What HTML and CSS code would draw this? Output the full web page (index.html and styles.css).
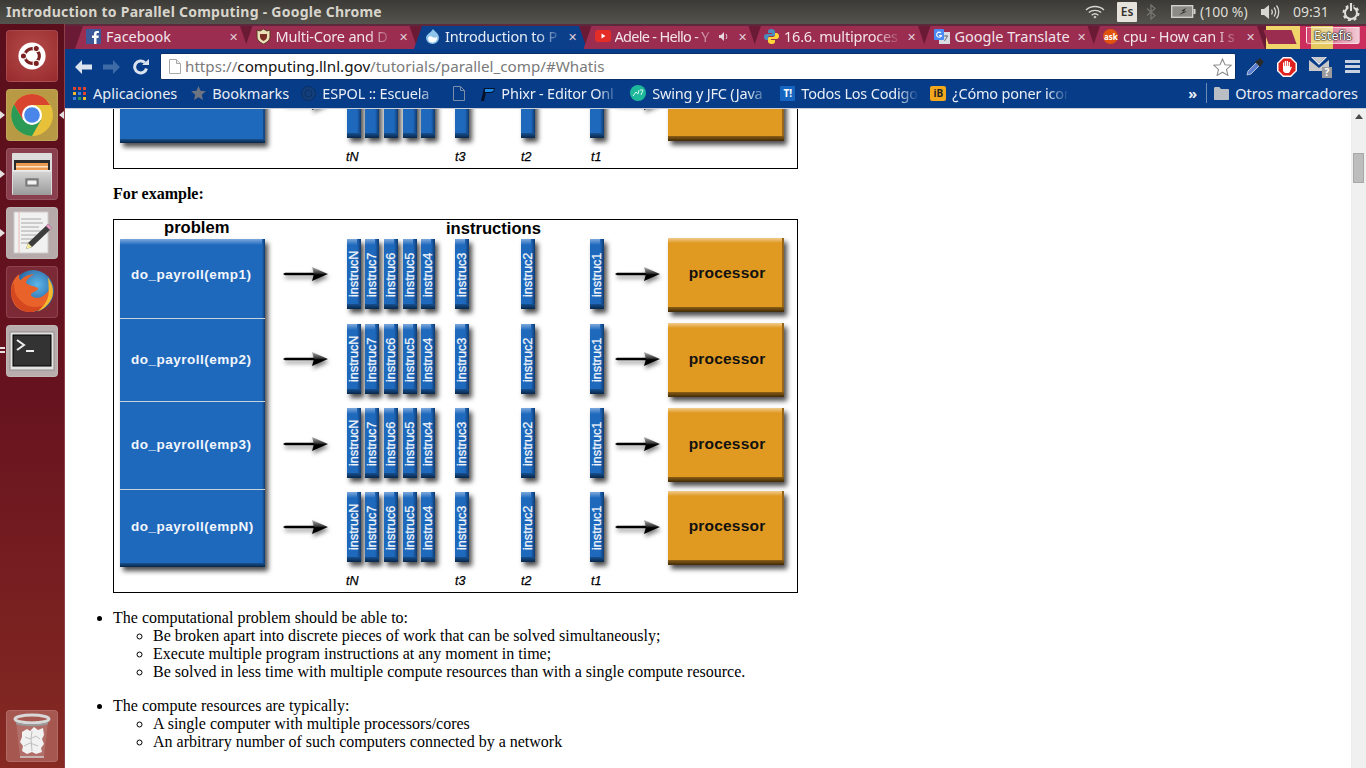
FILE: index.html
```html
<!DOCTYPE html>
<html lang="en">
<head>
    <meta charset="UTF-8">
    <meta name="viewport" content="width=device-width, initial-scale=1.0">
    <title>Introduction to Parallel Computing - Google Chrome</title>
    <link rel="stylesheet" href="styles.css">
</head>
<body>
    <!-- shared shapes for the two figures -->
    <svg class="defs" width="0" height="0">
        <defs>
            <linearGradient id="blueTop" x1="0" y1="0" x2="0" y2="1"><stop offset="0" stop-color="#7da9dc"/><stop offset="1" stop-color="#1f69bd"/></linearGradient>
            <linearGradient id="blueBot" x1="0" y1="0" x2="0" y2="1"><stop offset="0" stop-color="#17508f"/><stop offset="1" stop-color="#08264a"/></linearGradient>
            <linearGradient id="blueRight" x1="0" y1="0" x2="1" y2="0"><stop offset="0" stop-color="#1f69bd"/><stop offset="1" stop-color="#0e3a70"/></linearGradient>
            <linearGradient id="orangeTop" x1="0" y1="0" x2="0" y2="1"><stop offset="0" stop-color="#f0cc90"/><stop offset="1" stop-color="#e09a22"/></linearGradient>
            <linearGradient id="orangeBot" x1="0" y1="0" x2="0" y2="1"><stop offset="0" stop-color="#8c5f14"/><stop offset="1" stop-color="#3f2a08"/></linearGradient>
            <linearGradient id="headFill" x1="0" y1="0" x2="0" y2="1"><stop offset="0" stop-color="#b5b5b5"/><stop offset=".45" stop-color="#333"/><stop offset=".55" stop-color="#000"/><stop offset="1" stop-color="#000"/></linearGradient>
            <linearGradient id="filesBody" x1="0" y1="0" x2="0" y2="1"><stop offset="0" stop-color="#d8d8d8"/><stop offset="1" stop-color="#9a9a9a"/></linearGradient>
            <radialGradient id="foxGlobe" cx=".6" cy=".35" r=".7"><stop offset="0" stop-color="#5cb8ea"/><stop offset="1" stop-color="#123f80"/></radialGradient>
            <g id="bar" class="shadow">
                <rect width="14" height="70" fill="#1f69bd"/>
                <rect width="14" height="6" fill="url(#blueTop)"/>
                <rect x="10" width="4" height="70" fill="url(#blueRight)"/>
                <rect y="65" width="14" height="5" fill="url(#blueBot)"/>
            </g>
            <g id="proc" class="shadow">
                <rect width="116" height="74" fill="#e09a22"/>
                <rect width="116" height="5" fill="url(#orangeTop)"/>
                <rect x="114" width="2" height="74" fill="#96661a"/>
                <rect y="69" width="116" height="5" fill="url(#orangeBot)"/>
            </g>
            <g id="arrow" class="arrow-shadow">
                <path d="M0 0l2-1.300h30v2.600H2z" fill="#000"/>
                <polygon points="29,-7 45,0 29,7 31,0" fill="url(#headFill)"/>
            </g>
            <g id="blockPart" class="shadow">
                <rect x="120" y="100" width="145" height="43" fill="#1f69bd"/>
                <rect x="263" y="100" width="2" height="43" fill="#144a8a"/>
                <rect x="120" y="139" width="145" height="4" fill="url(#blueBot)"/>
            </g>
        </defs>
    </svg>

    <header class="topbar">
        <span class="win-title">Introduction to Parallel Computing - Google Chrome</span>
        <div class="indicators">
            <svg class="ind-wifi" width="20" height="14" viewBox="0 0 20 14"><g fill="none" stroke="#d8d6d0" stroke-width="1.400"><path d="M1 5c5-4.600 13-4.600 18 0"/><path d="M3.800 7.600c3.400-3 9-3 12.400 0"/><path d="M6.600 10.200c2-1.600 4.800-1.600 6.800 0"/></g><path d="M8.400 12l1.600-1.200 1.600 1.200-1.600 1.600z" fill="#d8d6d0"/></svg>
            <span class="ind-lang">Es</span>
            <svg class="ind-bt" width="11" height="16" viewBox="0 0 11 16"><path d="M1 4.500l8 7-4 3.500V1l4 3.500-8 7" fill="none" stroke="#77756f" stroke-width="1.300"/></svg>
            <svg class="ind-bat" width="25" height="13" viewBox="0 0 25 13"><rect x=".7" y=".7" width="21" height="11.600" fill="#8d8b85" stroke="#d8d6d0" stroke-width="1.300"/><rect x="22.500" y="4" width="2" height="5" fill="#d8d6d0"/><path d="M15 3l-5 3h3l-5 4 8-3.500h-3z" fill="#2f2e2a"/></svg>
            <span class="ind-text ind-pct">(100 %)</span>
            <svg class="ind-vol" width="20" height="16" viewBox="0 0 20 16"><path d="M0 5h3l5-4v14l-5-4H0z" fill="#d8d6d0"/><g fill="none" stroke="#d8d6d0" stroke-width="1.300"><path d="M10.500 5.500c1 1.500 1 3.500 0 5"/><path d="M13 3.500c2 2.700 2 6.300 0 9"/><path d="M15.500 1.500c3 3.800 3 9.200 0 13"/></g></svg>
            <span class="ind-text ind-clock">09:31</span>
            <svg class="ind-power" width="18" height="18" viewBox="0 0 18 18"><circle cx="9" cy="10" r="6" fill="none" stroke="#e2e0da" stroke-width="2"/><circle cx="9" cy="10" r="7.500" fill="none" stroke="#e2e0da" stroke-width="2" stroke-dasharray="3 2.900"/><rect x="6.500" y="0" width="5" height="6" fill="#4c4a45"/><rect x="8" y="0" width="2" height="8" fill="#e2e0da"/></svg>
        </div>
    </header>

    <div class="desktop">
        <nav class="launcher">
            <div class="tile tile-ubuntu">
                <svg width="28" height="28" viewBox="0 0 36 36"><circle cx="18" cy="18" r="17.500" fill="#fff"/><circle cx="18" cy="18" r="9.500" fill="none" stroke="#7c2122" stroke-width="4"/><g fill="#7c2122" stroke="#fff" stroke-width="1.500"><circle cx="7" cy="18" r="4"/><circle cx="23.500" cy="8.500" r="4"/><circle cx="23.500" cy="27.500" r="4"/></g></svg>
            </div>
            <div class="tile tile-chrome">
                <span class="pip pip-left"></span><span class="pip pip-right"></span>
                <svg width="44" height="44" viewBox="0 0 44 44"><circle cx="22" cy="22" r="21" fill="#e8c13a"/><path d="M22 1a21 21 0 0 0-18 10.500L13 27l9-15h18A21 21 0 0 0 22 1z" fill="#d9442f"/><path d="M4 11.500A21 21 0 0 0 22 43l9-16H13z" fill="#2a9a55"/><circle cx="22" cy="22" r="10" fill="#fff"/><circle cx="22" cy="22" r="7.800" fill="#4a85ea"/></svg>
            </div>
            <div class="tile tile-files">
                <span class="pip pip-left"></span>
                <svg width="42" height="44" viewBox="0 0 42 44"><rect x="1" y="1" width="40" height="42" rx="1" fill="#dcdcdc"/><rect x="3" y="8" width="36" height="12" fill="#2a2a2a"/><rect x="5" y="11" width="32" height="7" fill="#ec9a52"/><rect x="5" y="14" width="32" height="1.500" fill="#fbe3c4"/><rect x="2" y="18" width="38" height="25" fill="url(#filesBody)"/><rect x="2" y="18" width="38" height="1.500" fill="#efefef"/><rect x="14" y="26" width="14" height="9" rx="1" fill="#8d8d8d"/><rect x="16" y="28" width="10" height="5" fill="#f2f2f2" stroke="#555" stroke-width=".7"/></svg>
            </div>
            <div class="tile tile-editor">
                <span class="pip pip-left"></span>
                <svg width="42" height="44" viewBox="0 0 42 44"><rect x="3" y="1" width="34" height="41" fill="#f1f1f1" stroke="#ccc"/><path d="M8 1v41" stroke="#eeb8b8"/><g stroke="#a8a8a8"><path d="M10 8h20M10 12h22M10 16h18M10 20h21M10 24h16M10 28h12M10 32h8"/></g><path d="M37 13l4 4-20 19-6 2 2-6z" fill="#3d3d3d"/><path d="M37 13l4 4-2 2-4-4z" fill="#e59ac4"/><path d="M17 32l4 4-6 2z" fill="#f4eba0"/></svg>
            </div>
            <div class="tile tile-firefox">
                <svg width="48" height="48" viewBox="0 0 46 46"><circle cx="24" cy="22" r="20" fill="url(#foxGlobe)"/><path d="M3 24C2 15 7 8 11 6c-1 3 0 5 1 6 3-4 8-6 13-6-4 2-7 5-8 8 3 4 10 3 12 6-1 3-7 3-7 6 4 5 14 3 19-8 1 4 1 9-2 14-5 8-14 11-21 10C8 41 3 32 3 24z" fill="#e8622a"/><path d="M3 24c1 9 7 17 16 18 7 1 13-2 17-7-8 4-17 3-23-3C8 28 5 22 6 14 4 17 3 20 3 24z" fill="#d4471f"/><path d="M38 9c5 6 7 15 3 22-3 5-7 9-13 11 7-6 11-12 11-19 0-5 0-10-1-14z" fill="#f6b82e"/></svg>
            </div>
            <div class="tile tile-term">
                <span class="pip-dash"></span>
                <svg width="46" height="40" viewBox="0 0 46 40"><rect x="1" y="1" width="44" height="38" fill="#e3e3e3" stroke="#8e8e8e"/><rect x="4" y="4" width="38" height="31" fill="#333" stroke="#000"/><path d="M8 9l7 5-7 5" fill="none" stroke="#eee" stroke-width="2"/><rect x="17" y="19" width="8" height="2" fill="#eee"/></svg>
            </div>
            <div class="tile tile-trash">
                <svg width="38" height="46" viewBox="0 0 38 46"><path d="M3 8h32l-4 36H7z" fill="#ffffff" fill-opacity=".14"/><ellipse cx="19" cy="6" rx="17" ry="4" fill="none" stroke="#d8d8d8" stroke-width="3"/><path d="M3 9c6 3 26 3 32 0v2c-6 3-26 3-32 0z" fill="#999"/><path d="M9 19l5-3 3 2 4-4 4 3 5-2 1 7-2 4 2 5-3 4 1 4-6 2-4-2-5 2-5-3 1-5-3-4 2-5z" fill="#f1f1f1"/><path d="M12 24l5 2 6-3 4 3M11 33l6-3 8 3M19 18l-1 8 1 12" fill="none" stroke="#bdbdbd"/><path d="M7 44h24" stroke="#cfcfcf" stroke-width="1.500"/></svg>
            </div>
        </nav>

        <div class="browser">
            <div class="tabstrip">
                <div class="tab">
                    <svg class="fav" width="15" height="15" viewBox="0 0 15 15"><rect width="15" height="15" fill="#3b5998"/><path d="M10.500 15V9h2l.3-2.400h-2.300V5.200c0-.7.2-1.100 1.200-1.100h1.200V2c-.9-.1-1.500-.1-2-.1C9 1.900 8 3 8 5v1.600H6V9h2v6z" fill="#fff"/></svg>
                    <span class="tab-title">Facebook</span><span class="tab-x">✕</span>
                </div>
                <div class="tab">
                    <svg class="fav" width="15" height="15" viewBox="0 0 15 15"><path d="M1 1l3 1 3.500-2L11 2l3-1v7c0 3-3 5.500-6.500 7C4 13.500 1 11 1 8z" fill="#e9dfb8" stroke="#5a3a20"/><path d="M4 5h7v3c0 2-2 3-3.500 4C6 11 4 10 4 8z" fill="#7b2d26"/></svg>
                    <span class="tab-title tab-cut">Multi-Core and D</span><span class="tab-x">✕</span>
                </div>
                <div class="tab tab-active">
                    <svg class="fav" width="15" height="15" viewBox="0 0 15 15"><path d="M8 0c1 2 6 4 6 9a6.500 6 0 0 1-13 0c0-4 5-5 7-9z" fill="#8fc4ea"/><path d="M3 9c1-2 3-2 4.500-1S11 9 12 8c1 3-2 5.500-4.500 5.500S3 12 3 9z" fill="#fff"/></svg>
                    <span class="tab-title tab-cut">Introduction to P</span><span class="tab-x">✕</span>
                </div>
                <div class="tab">
                    <svg class="fav fav-yt" width="16" height="12" viewBox="0 0 16 12"><rect width="16" height="12" rx="3" fill="#e52d27"/><path d="M6.500 3.500l4 2.500-4 2.500z" fill="#fff"/></svg>
                    <span class="tab-title tab-cut tab-tight">Adele - Hello - Y</span>
                    <svg class="tab-sound" width="10" height="9" viewBox="0 0 10 9"><path d="M0 3h2l3-3v9L2 6H0z" fill="#e6d5dc"/><path d="M7 2c1 1.500 1 3.500 0 5" fill="none" stroke="#e6d5dc"/></svg>
                    <span class="tab-x">✕</span>
                </div>
                <div class="tab">
                    <svg class="fav" width="15" height="15" viewBox="0 0 15 15"><path d="M7.500 0C4.500 0 4 1.300 4 2.500V4h4v1H2.500C1 5 0 6 0 7.800S1 11 2.500 11H4V9c0-1.300 1-2 2-2h3.500C10.500 7 11 6.300 11 5.500v-3C11 1 9.500 0 7.500 0z" fill="#4b8bbe"/><path d="M7.500 15c3 0 3.500-1.300 3.500-2.500V11H7v-1h5.500C14 10 15 9 15 7.200S14 4 12.500 4H11v2c0 1.300-1 2-2 2H5.500C4.500 8 4 8.700 4 9.500v3C4 14 5.500 15 7.500 15z" fill="#ffd43b"/></svg>
                    <span class="tab-title tab-cut">16.6. multiproces</span><span class="tab-x">✕</span>
                </div>
                <div class="tab">
                    <svg class="fav" width="16" height="15" viewBox="0 0 16 15"><rect x="5" y="3" width="11" height="12" fill="#d9dde3"/><path d="M10 7h4M12 6v1M10.500 12l3-5" stroke="#6c7480" fill="none"/><rect width="10" height="11" rx="1" fill="#4a8af4"/><path d="M7 4a2.500 2.500 0 1 0 .5 2.500H5" fill="none" stroke="#fff" stroke-width="1.100"/></svg>
                    <span class="tab-title">Google Translate</span><span class="tab-x">✕</span>
                </div>
                <div class="tab">
                    <svg class="fav" width="15" height="15" viewBox="0 0 15 15"><circle cx="7.500" cy="7.500" r="7.500" fill="#e2530e"/></svg>
                    <span class="fav-ask">ask</span>
                    <span class="tab-title tab-cut">cpu - How can I s</span><span class="tab-x">✕</span>
                </div>
                <div class="newtab"></div>
                <div class="profile">Estefis</div>
            </div>

            <div class="toolbar">
                <svg class="tb-back" width="17" height="14" viewBox="0 0 17 14"><path d="M7 0L0 7l7 7V9.500h10v-5H7z" fill="#dbe3ee"/></svg>
                <svg class="tb-fwd" width="17" height="14" viewBox="0 0 17 14"><path d="M10 0l7 7-7 7V9.500H0v-5h10z" fill="#3e6aa5"/></svg>
                <svg class="tb-reload" width="16" height="16" viewBox="0 0 16 16"><path d="M13.500 9.500A6 6 0 1 1 11.800 3.600" fill="none" stroke="#dbe3ee" stroke-width="3"/><path d="M9 6h7V0z" fill="#dbe3ee"/></svg>
                <div class="omnibox">
                    <svg class="omni-page" width="12" height="15" viewBox="0 0 12 15"><path d="M.5.500h7l4 4v10H.500z" fill="#fff" stroke="#a9a9a9"/><path d="M7.500.500v4h4" fill="#e8e8e8" stroke="#a9a9a9"/></svg>
                    <span class="url"><span class="url-dim">https://</span>computing.llnl.gov<span class="url-dim">/tutorials/parallel_comp/#Whatis</span></span>
                    <svg class="omni-star" width="19" height="18" viewBox="0 0 19 18"><path d="M9.500 1l2.500 5.700 6.200.6-4.700 4.100 1.400 6-5.400-3.200-5.400 3.200 1.400-6L.8 7.300 7 6.700z" fill="#fff" stroke="#8d8d8d" stroke-width="1.100"/></svg>
                </div>
                <svg class="tb-drop" width="18" height="18" viewBox="0 0 18 18"><path d="M1 17l1-4 8-8 3 3-8 8z" fill="#5c7fd0" stroke="#cfd6e4" stroke-width=".8"/><path d="M10 3l2-1 2-2 4 4-2 2-1 2-1 1-5-5z" fill="#2a2a2a"/></svg>
                <svg class="tb-block" width="20" height="20" viewBox="0 0 20 20"><path d="M6 0h8l6 6v8l-6 6H6l-6-6V6z" fill="#fff"/><path d="M6.500 1.500h7l5 5v7l-5 5h-7l-5-5v-7z" fill="#e0201c"/><path d="M6 9V5.500h1.200V9h.6V4h1.300v5h.6V4H11v5h.6V5h1.300v6l1-1.500 1 .5-2 4.500c-.5 1-1 1.500-2.500 1.500H9c-2 0-3-1.500-3-3z" fill="#fff"/></svg>
                <div class="tb-mail">
                    <svg width="23" height="22" viewBox="0 0 23 22"><path d="M0 1h20v14H0z" fill="#c9c9c9"/><path d="M0 1h4l6 6 6-6h4v3l-10 8L0 4z" fill="#063c88"/><path d="M2 1h2l6 6 6-6h2l-8 8z" fill="#eee"/><rect x="13" y="11" width="10" height="11" fill="#9c9c9c"/></svg>
                    <span class="mail-q">?</span>
                </div>
                <div class="tb-menu"><span></span><span></span><span></span></div>
            </div>

            <div class="bookmarks">
                <svg class="bm-ico bm-apps" width="13" height="13" viewBox="0 0 13 13">
                    <g fill="#e0432f"><rect width="3" height="3"/><rect x="5" width="3" height="3"/><rect x="10" width="3" height="3"/></g>
                    <g fill="#f0b92b"><rect y="5" width="3" height="3"/><rect x="5" y="5" width="3" height="3" fill="#3f7fe0"/><rect x="10" y="5" width="3" height="3" fill="#e0432f"/></g>
                    <g fill="#3f7fe0"><rect y="10" width="3" height="3"/><rect x="5" y="10" width="3" height="3" fill="#2a9a55"/><rect x="10" y="10" width="3" height="3" fill="#f0b92b"/></g>
                </svg>
                <span class="bm-text bm-apps-text">Aplicaciones</span>
                <svg class="bm-ico bm-star" width="15" height="14" viewBox="0 0 15 14"><path d="M7.500 0l2 4.800 5.300.5-4 3.500 1.200 5.200-4.500-2.700L3 14l1.200-5.200-4-3.500 5.300-.5z" fill="#6e7480"/></svg>
                <span class="bm-text bm-marks-text">Bookmarks</span>
                <div class="bm">
                    <svg width="15" height="15" viewBox="0 0 15 15"><circle cx="7.500" cy="7.500" r="7" fill="#123f7c" stroke="#0c2f60"/><circle cx="7.500" cy="7.500" r="3.500" fill="none" stroke="#0c2f60"/></svg>
                    <span class="bm-title">ESPOL :: Escuela</span>
                </div>
                <svg class="bm-ico bm-file" width="12" height="15" viewBox="0 0 12 15"><path d="M.5.500h7l4 4v10H.500zM7.500.500v4h4" fill="none" stroke="#7a8da8"/></svg>
                <div class="bm">
                    <svg width="15" height="15" viewBox="0 0 15 15"><path d="M1 15L4 2h11c-.5 3-1.500 5-5 5H6l-2 8z" fill="#06122a"/><path d="M5 3h9c-.5 2-1.500 3-4 3H5z" fill="#1e88e5"/></svg>
                    <span class="bm-title">Phixr - Editor Onl</span>
                </div>
                <div class="bm">
                    <svg width="16" height="16" viewBox="0 0 16 16"><circle cx="8" cy="8" r="8" fill="#1eb89a"/><path d="M3 11l3-4 2 2 1-4M10 5h3l-2 5" fill="none" stroke="#d8f5ee"/></svg>
                    <span class="bm-title">Swing y JFC (Java</span>
                </div>
                <div class="bm">
                    <span class="bm-t">T!</span>
                    <span class="bm-title">Todos Los Codigo</span>
                </div>
                <div class="bm">
                    <span class="bm-ib">iB</span>
                    <span class="bm-title">¿Cómo poner icon</span>
                </div>
                <span class="bm-more">»</span>
                <span class="bm-sep"></span>
                <svg class="bm-ico bm-folder" width="15" height="13" viewBox="0 0 15 13"><path d="M0 1.500C0 .7.500 0 1.300 0h4L7 2h7c.6 0 1 .5 1 1v9c0 .6-.4 1-1 1H1c-.6 0-1-.4-1-1z" fill="#b9bdc4"/></svg>
                <span class="bm-text">Otros marcadores</span>
            </div>

            <div class="viewport">
                <main class="page">
                    <!-- bottom of the figure above, the rest is scrolled away -->
                    <div class="fig fig-cut">
                        <svg width="683" height="59" viewBox="114 109 683 59">
                            <use href="#blockPart"/>
                            <use href="#arrow" x="283" y="103"/>
                            <use href="#arrow" x="615" y="103"/>
                            <use href="#bar" x="347" y="68"/><use href="#bar" x="365" y="68"/><use href="#bar" x="384" y="68"/><use href="#bar" x="403" y="68"/><use href="#bar" x="421" y="68"/>
                            <use href="#bar" x="455" y="68"/><use href="#bar" x="521" y="68"/><use href="#bar" x="590" y="68"/>
                            <use href="#proc" x="668" y="67"/>
                            <text class="t-label" x="346" y="161">tN</text><text class="t-label" x="455" y="161">t3</text><text class="t-label" x="521" y="161">t2</text><text class="t-label" x="591" y="161">t1</text>
                        </svg>
                    </div>

                    <p class="example"><b>For example:</b></p>

                    <div class="fig">
                        <svg width="683" height="372" viewBox="114 220 683 372">
                            <text class="heading" x="164" y="233">problem</text>
                            <text class="heading" x="446" y="234">instructions</text>
                            <g class="shadow">
                                <rect x="120" y="239" width="145" height="328" fill="#1f69bd"/>
                                <rect x="120" y="239" width="145" height="6" fill="url(#blueTop)"/>
                                <rect x="262" y="239" width="3" height="328" fill="url(#blueRight)"/>
                                <rect x="120" y="563" width="145" height="4" fill="url(#blueBot)"/>
                                <rect x="120" y="318" width="145" height="1" fill="#c9d3dd"/>
                                <rect x="120" y="401" width="145" height="1" fill="#c9d3dd"/>
                                <rect x="120" y="489" width="145" height="1" fill="#c9d3dd"/>
                            </g>

                            <g>
                                <text class="payroll" x="131" y="279">do_payroll(emp1)</text>
                                <use href="#arrow" x="283" y="274"/>
                                <use href="#bar" x="347" y="239"/><use href="#bar" x="365" y="239"/><use href="#bar" x="384" y="239"/><use href="#bar" x="403" y="239"/><use href="#bar" x="421" y="239"/>
                                <use href="#bar" x="455" y="239"/><use href="#bar" x="521" y="239"/><use href="#bar" x="590" y="239"/>
                                <text class="bar-label" transform="translate(358,297) rotate(-90)">instrucN</text>
                                <text class="bar-label" transform="translate(376,297) rotate(-90)">instruc7</text>
                                <text class="bar-label" transform="translate(395,297) rotate(-90)">instruc6</text>
                                <text class="bar-label" transform="translate(414,297) rotate(-90)">instruc5</text>
                                <text class="bar-label" transform="translate(432,297) rotate(-90)">instruc4</text>
                                <text class="bar-label" transform="translate(466,297) rotate(-90)">instruc3</text>
                                <text class="bar-label" transform="translate(532,297) rotate(-90)">instruc2</text>
                                <text class="bar-label" transform="translate(601,297) rotate(-90)">instruc1</text>
                                <use href="#arrow" x="615" y="274"/>
                                <use href="#proc" x="668" y="238"/>
                                <text class="proc-label" x="727" y="278">processor</text>
                            </g>
                            <g transform="translate(0,85)">
                                <text class="payroll" x="131" y="279">do_payroll(emp2)</text>
                                <use href="#arrow" x="283" y="274"/>
                                <use href="#bar" x="347" y="239"/><use href="#bar" x="365" y="239"/><use href="#bar" x="384" y="239"/><use href="#bar" x="403" y="239"/><use href="#bar" x="421" y="239"/>
                                <use href="#bar" x="455" y="239"/><use href="#bar" x="521" y="239"/><use href="#bar" x="590" y="239"/>
                                <text class="bar-label" transform="translate(358,297) rotate(-90)">instrucN</text>
                                <text class="bar-label" transform="translate(376,297) rotate(-90)">instruc7</text>
                                <text class="bar-label" transform="translate(395,297) rotate(-90)">instruc6</text>
                                <text class="bar-label" transform="translate(414,297) rotate(-90)">instruc5</text>
                                <text class="bar-label" transform="translate(432,297) rotate(-90)">instruc4</text>
                                <text class="bar-label" transform="translate(466,297) rotate(-90)">instruc3</text>
                                <text class="bar-label" transform="translate(532,297) rotate(-90)">instruc2</text>
                                <text class="bar-label" transform="translate(601,297) rotate(-90)">instruc1</text>
                                <use href="#arrow" x="615" y="274"/>
                                <use href="#proc" x="668" y="238"/>
                                <text class="proc-label" x="727" y="279">processor</text>
                            </g>
                            <g transform="translate(0,170)">
                                <text class="payroll" x="131" y="279">do_payroll(emp3)</text>
                                <use href="#arrow" x="283" y="274"/>
                                <use href="#bar" x="347" y="238"/><use href="#bar" x="365" y="238"/><use href="#bar" x="384" y="238"/><use href="#bar" x="403" y="238"/><use href="#bar" x="421" y="238"/>
                                <use href="#bar" x="455" y="238"/><use href="#bar" x="521" y="238"/><use href="#bar" x="590" y="238"/>
                                <text class="bar-label" transform="translate(358,296) rotate(-90)">instrucN</text>
                                <text class="bar-label" transform="translate(376,296) rotate(-90)">instruc7</text>
                                <text class="bar-label" transform="translate(395,296) rotate(-90)">instruc6</text>
                                <text class="bar-label" transform="translate(414,296) rotate(-90)">instruc5</text>
                                <text class="bar-label" transform="translate(432,296) rotate(-90)">instruc4</text>
                                <text class="bar-label" transform="translate(466,296) rotate(-90)">instruc3</text>
                                <text class="bar-label" transform="translate(532,296) rotate(-90)">instruc2</text>
                                <text class="bar-label" transform="translate(601,296) rotate(-90)">instruc1</text>
                                <use href="#arrow" x="615" y="274"/>
                                <use href="#proc" x="668" y="238"/>
                                <text class="proc-label" x="727" y="279">processor</text>
                            </g>
                            <g transform="translate(0,253)">
                                <text class="payroll" x="131" y="278">do_payroll(empN)</text>
                                <use href="#arrow" x="283" y="274"/>
                                <use href="#bar" x="347" y="239"/><use href="#bar" x="365" y="239"/><use href="#bar" x="384" y="239"/><use href="#bar" x="403" y="239"/><use href="#bar" x="421" y="239"/>
                                <use href="#bar" x="455" y="239"/><use href="#bar" x="521" y="239"/><use href="#bar" x="590" y="239"/>
                                <text class="bar-label" transform="translate(358,297) rotate(-90)">instrucN</text>
                                <text class="bar-label" transform="translate(376,297) rotate(-90)">instruc7</text>
                                <text class="bar-label" transform="translate(395,297) rotate(-90)">instruc6</text>
                                <text class="bar-label" transform="translate(414,297) rotate(-90)">instruc5</text>
                                <text class="bar-label" transform="translate(432,297) rotate(-90)">instruc4</text>
                                <text class="bar-label" transform="translate(466,297) rotate(-90)">instruc3</text>
                                <text class="bar-label" transform="translate(532,297) rotate(-90)">instruc2</text>
                                <text class="bar-label" transform="translate(601,297) rotate(-90)">instruc1</text>
                                <use href="#arrow" x="615" y="274"/>
                                <use href="#proc" x="668" y="238"/>
                                <text class="proc-label" x="727" y="278">processor</text>
                            </g>
                            <text class="t-label" x="346" y="585">tN</text>
                            <text class="t-label" x="455" y="585">t3</text>
                            <text class="t-label" x="521" y="585">t2</text>
                            <text class="t-label" x="591" y="585">t1</text>
                        </svg>
                    </div>

                    <ul class="list">
                        <li>The computational problem should be able to:
                            <ul>
                                <li>Be broken apart into discrete pieces of work that can be solved simultaneously;</li>
                                <li>Execute multiple program instructions at any moment in time;</li>
                                <li>Be solved in less time with multiple compute resources than with a single compute resource.</li>
                            </ul>
                        </li>
                        <li>The compute resources are typically:
                            <ul>
                                <li>A single computer with multiple processors/cores</li>
                                <li>An arbitrary number of such computers connected by a network</li>
                            </ul>
                        </li>
                    </ul>
                </main>
                <aside class="scrollbar">
                    <span class="scroll-up"></span>
                    <span class="scroll-thumb"></span>
                </aside>
            </div>
        </div>
    </div>
</body>
</html>
```

FILE: styles.css
```css
* {
    box-sizing: border-box;
}
html, body {
    margin: 0;
    height: 768px;
    overflow: hidden;
}
body {
    width: 1366px;
    font-family: "Noto Sans", sans-serif;
    background: #fff;
    color: #000;
}
.defs {
    position: absolute;
}

/* top panel */
.topbar {
    height: 24px;
    display: flex;
    align-items: center;
    justify-content: space-between;
    padding: 0 0 1px 6px;
    background: linear-gradient(#3b3a36, #55534d);
}
.win-title {
    padding-bottom: 1px;
    font-size: 14px;
    font-weight: 700;
    color: #d8d5cc;
    letter-spacing: 0.25px;
    white-space: nowrap;
}
.indicators {
    display: flex;
    align-items: center;
    color: #dfddd6;
    font-size: 14px;
}
.ind-wifi { margin-right: 12px; }
.ind-lang {
    width: 20px;
    height: 20px;
    margin-right: 9px;
    background: #e6e3dc;
    color: #33322e;
    border-radius: 1px;
    font-size: 12px;
    font-weight: 600;
    line-height: 20px;
    text-align: center;
}
.ind-bt { margin-right: 14px; }
.ind-bat { margin-right: 4px; }
.ind-text {
    white-space: nowrap;
}
.ind-pct { width: 48px; margin-right: 13px; }
.ind-vol { margin-right: 12px; }
.ind-clock { width: 36px; margin-right: 13px; }
.ind-power { margin-right: 6px; }

.desktop {
    display: flex;
    height: 744px;
}

/* launcher */
.launcher {
    width: 65px;
    flex: none;
    display: flex;
    flex-direction: column;
    align-items: flex-start;
    gap: 7px;
    padding: 6px 0 6px 6px;
    background: linear-gradient(#5a0e1b, #67131f 50%, #862a22);
    border-right: 1px solid #8d4048;
}
.tile {
    position: relative;
    width: 52px;
    height: 52px;
    flex: none;
    display: flex;
    align-items: center;
    justify-content: center;
    border-radius: 4px;
    border: 1px solid rgba(255, 255, 255, 0.12);
}
.tile-ubuntu { background: radial-gradient(circle at 50% 40%, #b74c4c, #962a2c); }
.tile-chrome { background: #b89a45; }
.tile-files { background: #8a3f4e; }
.tile-editor { background: #b6aaaa; }
.tile-firefox { background: #7c2a36; }
.tile-term { background: #b9adad; }
.tile-trash {
    margin-top: auto;
    background: #a65750;
}
.pip {
    position: absolute;
    top: 21px;
    width: 0;
    height: 0;
    border-top: 4px solid transparent;
    border-bottom: 4px solid transparent;
}
.pip-left {
    left: -7px;
    border-left: 5px solid #e6e0e0;
}
.pip-right {
    right: -7px;
    border-right: 5px solid #e6e0e0;
}
.pip-dash {
    position: absolute;
    left: -7px;
    top: 21px;
    width: 5px;
    height: 6px;
    border-top: 2px solid #e6e0e0;
    border-bottom: 2px solid #e6e0e0;
}

/* browser frame */
.browser {
    flex: 1;
    min-width: 0;
    display: flex;
    flex-direction: column;
}
.tabstrip {
    position: relative;
    height: 25px;
    display: flex;
    padding-left: 10px;
    padding-top: 2px;
    background:
        linear-gradient(#5c2a3c 0, #5c2a3c 2px, transparent 2px),
        linear-gradient(90deg, #6b1a36 1201px, #f0d66a 1201px, #f0d66a 1235px, #cb2e5c 1235px, #cb2e5c 1246px, #e6c95e 1246px, #e6c95e 1268px, #cb2e5c 1268px);
}
.tab {
    width: 173px;
    height: 23px;
    flex: none;
    margin-right: -3.5px;
    display: flex;
    align-items: center;
    padding: 0 8px 3px 11px;
    background: #9b2d50;
    color: #f1e4ea;
    font-size: 14.500px;
    clip-path: polygon(0 100%, 8px 0, calc(100% - 8px) 0, 100% 100%);
}
.tab-active {
    background: #0b3f8a;
    color: #e6edf6;
}
.fav {
    flex: none;
    margin-right: 5px;
}
.fav-yt { margin-right: 4px; }
.fav-ask {
    position: absolute;
    margin-left: 1px;
    color: #fff;
    font-size: 8px;
    font-weight: 700;
}
.tab-title {
    flex: 1;
    min-width: 0;
    overflow: hidden;
    white-space: nowrap;
}
.tab-cut {
    letter-spacing: -0.2px;
    -webkit-mask-image: linear-gradient(90deg, #000 78%, transparent 100%);
    mask-image: linear-gradient(90deg, #000 78%, transparent 100%);
}
.tab-tight {
    letter-spacing: -0.7px;
}
.tab-sound {
    flex: none;
    margin: 0 4px 0 2px;
}
.tab-x {
    flex: none;
    width: 13px;
    margin-left: 3px;
    text-align: center;
    font-size: 11px;
    color: #e0cdd5;
}
.newtab {
    width: 28px;
    height: 14px;
    margin: 4px 0 0 4px;
    flex: none;
    background: #9b2d50;
    transform: skewX(20deg);
}
.profile {
    position: absolute;
    right: 6px;
    top: 3px;
    width: 54px;
    height: 17px;
    background: linear-gradient(90deg, rgba(255, 255, 255, 0.1), rgba(255, 255, 255, 0.75));
    border: 1px solid rgba(255, 255, 255, 0.5);
    border-radius: 0 0 3px 3px;
    color: #fff;
    font-size: 12.500px;
    line-height: 15px;
    text-align: center;
    text-shadow: 0 0 1px #000, 0 0 1px #000, 0 0 2px #000;
}

/* toolbar */
.toolbar {
    height: 36px;
    display: flex;
    align-items: center;
    padding: 0 0 1px 10px;
    background: #063c88;
}
.tb-back { margin-right: 11px; }
.tb-fwd { margin-right: 13px; }
.tb-reload { margin-right: 11px; }
.omnibox {
    width: 1076px;
    height: 27px;
    display: flex;
    align-items: center;
    padding: 0 3px 0 8px;
    background: #fff;
    border: 1px solid #0a2f66;
    border-radius: 2px;
}
.url {
    flex: 1;
    margin-left: 4px;
    padding-bottom: 1px;
    font-size: 15.200px;
    color: #111;
    white-space: nowrap;
}
.url-dim {
    color: #7a7a7a;
}
.tb-drop { margin-left: 10px; }
.tb-block { margin-left: 13px; }
.tb-mail {
    position: relative;
    height: 22px;
    margin-left: 12px;
}
.mail-q {
    position: absolute;
    right: 0;
    bottom: 0;
    width: 10px;
    color: #fff;
    font-size: 10px;
    font-weight: 700;
    line-height: 11px;
    text-align: center;
}
.tb-menu {
    width: 15px;
    margin-left: 13px;
    display: flex;
    flex-direction: column;
    gap: 2px;
}
.tb-menu span {
    height: 3px;
    background: #c8d2e0;
}

/* bookmarks bar */
.bookmarks {
    height: 24px;
    display: flex;
    align-items: center;
    padding: 0 8px 7px 8px;
    background: #063c88;
    border-bottom: 1px solid #c9ced6;
    color: #e9eef5;
    font-size: 14.500px;
}
.bm-ico { flex: none; }
.bm-text { white-space: nowrap; }
.bm-apps { margin-right: 7px; }
.bm-star { margin: 0 6px 0 13px; }
.bm-marks-text { margin-right: 12px; }
.bm-apps-text { width: 86px; }
.bm-marks-text { width: 78px; }
.bm {
    width: 139px;
    flex: none;
    margin-right: 11px;
    display: flex;
    align-items: center;
    gap: 6px;
}
.bm svg,
.bm-t,
.bm-ib { flex: none; }
.bm-title {
    flex: 1;
    min-width: 0;
    overflow: hidden;
    white-space: nowrap;
    letter-spacing: -0.2px;
    -webkit-mask-image: linear-gradient(90deg, #000 82%, transparent 100%);
    mask-image: linear-gradient(90deg, #000 82%, transparent 100%);
}
.bm-file { margin: 0 15px 0 2px; }
.bm-t {
    width: 15px;
    height: 15px;
    background: #1565c0;
    color: #fff;
    font-size: 10px;
    font-weight: 700;
    line-height: 15px;
    text-align: center;
    border-radius: 1px;
}
.bm-ib {
    width: 16px;
    height: 15px;
    background: #f2a81d;
    color: #222;
    font-size: 10px;
    font-weight: 700;
    line-height: 15px;
    text-align: center;
    border-radius: 2px;
}
.bm-more {
    margin-left: 108px;
    width: 10px;
    font-weight: 700;
    line-height: 1;
}
.bm-sep {
    width: 1px;
    height: 20px;
    margin: 0 7px 0 8px;
    background: #6f8cb6;
}
.bm-folder { margin-right: 6px; }

/* page area */
.viewport {
    flex: 1;
    min-height: 0;
    display: flex;
    background: #fff;
}
.page {
    flex: 1;
    min-width: 0;
    overflow: hidden;
    padding-left: 8px;
    font-family: "Liberation Serif", serif;
    font-size: 16px;
    line-height: 18px;
}
.scrollbar {
    position: relative;
    width: 15px;
    flex: none;
    background: #f0f0f0;
    border-left: 1px solid #ececec;
}
.scroll-up {
    position: absolute;
    left: 3px;
    top: 5px;
    border-left: 4px solid transparent;
    border-right: 4px solid transparent;
    border-bottom: 5px solid #4a4a4a;
}
.scroll-thumb {
    position: absolute;
    left: 1px;
    top: 44px;
    width: 11px;
    height: 30px;
    background: #bdbdbd;
    border: 1px solid #a8a8a8;
}
.fig {
    width: 685px;
    margin-left: 40px;
    border: 1px solid #000;
    line-height: 0;
    background: #fff;
}
.fig-cut {
    border-top: 0;
}
.fig svg {
    display: block;
    overflow: hidden;
}
.example {
    margin: 16px 0 16px 40px;
}
.shadow {
    filter: drop-shadow(3px 4px 2.500px rgba(0, 0, 0, 0.7));
}
.arrow-shadow {
    filter: drop-shadow(1px 3px 2px rgba(0, 0, 0, 0.5));
}
.heading {
    font: 700 16.600px "Liberation Sans", sans-serif;
    fill: #000;
}
.payroll {
    font: 700 13.500px "Liberation Sans", sans-serif;
    letter-spacing: 0.5px;
    fill: #f2f6fb;
}
.bar-label {
    font: 400 12.700px "Liberation Sans", sans-serif;
    fill: #f2f6fb;
    stroke: #f2f6fb;
    stroke-width: 0.25px;
}
.proc-label {
    font: 700 15.500px "Liberation Sans", sans-serif;
    letter-spacing: 0.2px;
    text-anchor: middle;
    fill: #111;
}
.t-label {
    font: italic 400 12.500px "Liberation Sans", sans-serif;
    fill: #000;
    stroke: #000;
    stroke-width: 0.25px;
}
.list {
    margin: 16px 0 0;
    padding-left: 40px;
}
.list > li {
    margin-bottom: 16px;
}
.list ul {
    margin: 0;
    padding-left: 40px;
}
```
